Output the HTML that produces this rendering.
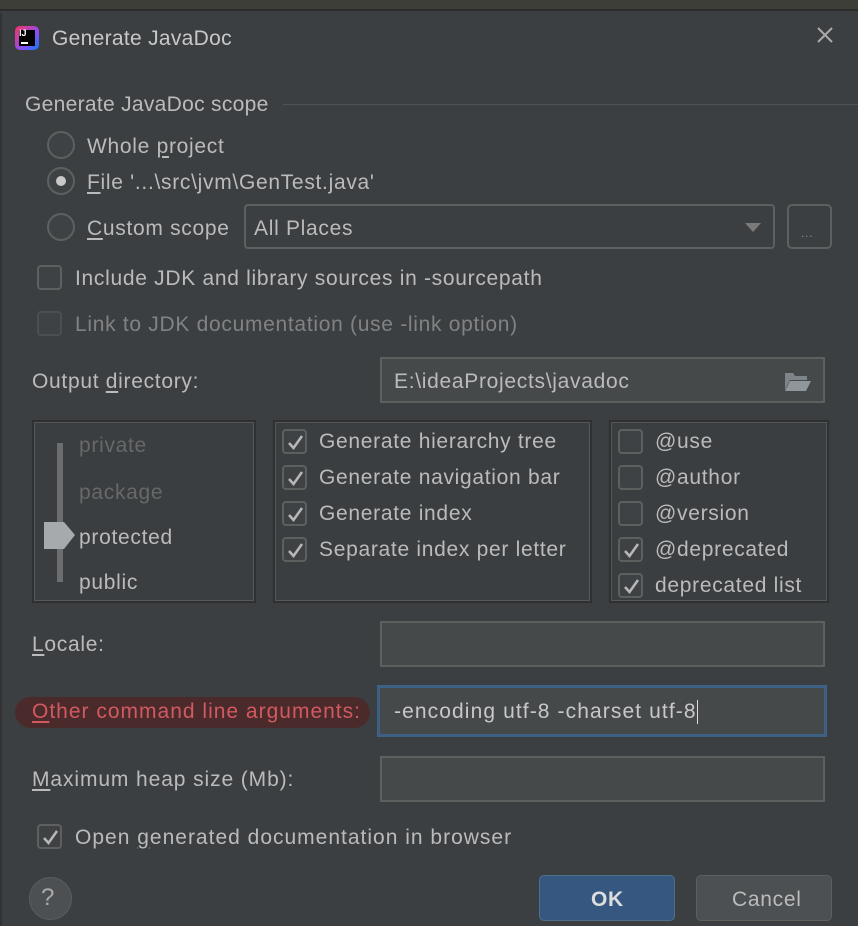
<!DOCTYPE html>
<html><head><meta charset="utf-8"><style>
*{box-sizing:border-box;margin:0;padding:0}
body{width:858px;height:926px;background:#3c3f41;position:relative;overflow:hidden;font-family:"Liberation Sans","Noto Sans CJK SC",sans-serif;font-size:21px;letter-spacing:0.7px;color:#bbbbbb}
.a{position:absolute;white-space:nowrap;line-height:24px}
.top{position:absolute;left:0;top:0;width:858px;height:11px;background:#3e3e39;border-bottom:2px solid #2b2b2b}
.radio{position:absolute;width:28px;height:28px;border-radius:50%;border:2px solid #5e6060;background:#3f4244}
.cb{position:absolute;width:25px;height:25px;border-radius:4px;border:2px solid #5e6060;background:#3f4244}
.cb.dis{border-color:#4c4f51}
.cb svg{position:absolute;left:2px;top:2px}
.field{position:absolute;background:#45494a;border:2px solid #5e6060}
.panel{position:absolute;border:2px solid #2e3032;box-shadow:inset 0 0 0 1px #555759;background:#3b3e40}
u{text-decoration:underline;text-underline-offset:3px}
</style></head><body>
<div class="top"></div>
<div style="position:absolute;left:0;top:13px;width:2px;height:913px;background:#333"></div>
<div style="position:absolute;left:15px;top:26px;width:24px;height:24px;border-radius:5px;background:linear-gradient(135deg,#fe315d,#8b4cf5 60%,#087cfa)"></div>
<div style="position:absolute;left:19px;top:30px;width:16px;height:16px;background:#000"></div>
<div class="a" style="left:19px;top:28px;font-size:9px;font-weight:bold;color:#fff;line-height:10px;letter-spacing:0">IJ</div>
<div style="position:absolute;left:21px;top:42px;width:7px;height:2px;background:#fff"></div>
<div class="a" style="left:52px;top:27px;font-size:21px;letter-spacing:0.3px;color:#c8c8c8">Generate JavaDoc</div>
<svg style="position:absolute;left:816px;top:26px" width="18" height="18"><path d="M2 2L16 16M16 2L2 16" stroke="#aaa" stroke-width="2"/></svg>

<div class="a" style="left:25px;top:93px;letter-spacing:0.3px">Generate JavaDoc scope</div>
<div style="position:absolute;left:283px;top:104px;width:575px;height:1px;background:#505355"></div>

<div class="radio" style="left:47px;top:131px"></div>
<div class="a" style="left:87px;top:135px">Whole <u>p</u>roject</div>
<div class="radio" style="left:47px;top:167px"></div>
<div style="position:absolute;left:56px;top:176px;width:10px;height:10px;border-radius:50%;background:#c8c8c8"></div>
<div class="a" style="left:87px;top:171px"><u>F</u>ile '...\src\jvm\GenTest.java'</div>
<div class="radio" style="left:47px;top:213px"></div>
<div class="a" style="left:87px;top:217px"><u>C</u>ustom scope</div>
<div style="position:absolute;left:244px;top:204px;width:531px;height:45px;border:2px solid #5e6060;border-radius:4px;background:#3c3f41"></div>
<div class="a" style="left:254px;top:217px">All Places</div>
<svg style="position:absolute;left:745px;top:223px" width="16" height="10"><path d="M0 0H16L8 9Z" fill="#7a7a7a"/></svg>
<div style="position:absolute;left:787px;top:204px;width:45px;height:45px;border:2px solid #5e6060;border-radius:5px"></div>
<div class="a" style="left:801px;top:221px;font-size:12px;color:#888">...</div>

<div class="cb" style="left:37px;top:265px"></div>
<div class="a" style="left:75px;top:267px">Include JDK and library sources in -sourcepath</div>
<div class="cb dis" style="left:37px;top:311px"></div>
<div class="a" style="left:75px;top:313px;color:#808284">Link to JDK documentation (use -link option)</div>

<div class="a" style="left:32px;top:370px">Output <u>d</u>irectory:</div>
<div class="field" style="left:380px;top:357px;width:445px;height:46px"></div>
<div class="a" style="left:394px;top:370px">E:\ideaProjects\javadoc</div>
<svg style="position:absolute;left:784px;top:370px" width="28" height="22"><path d="M1 3h8l2 3h12v4H6L1 20Z" fill="#7d858a"/><path d="M6 11h21l-5 10H1Z" fill="#8f979c"/></svg>

<div class="panel" style="left:32px;top:420px;width:224px;height:183px"></div>
<div style="position:absolute;left:57px;top:443px;width:6px;height:139px;background:#6b6d6f"></div>
<svg style="position:absolute;left:44px;top:522px" width="32" height="28"><path d="M0 0H20L31 13L20 27H0Z" fill="#a7aaad"/></svg>
<div class="a" style="left:79px;top:434px;color:#666869">private</div>
<div class="a" style="left:79px;top:481px;color:#666869">package</div>
<div class="a" style="left:79px;top:526px">protected</div>
<div class="a" style="left:79px;top:571px">public</div>

<div class="panel" style="left:273px;top:420px;width:319px;height:183px"></div>
<div class="panel" style="left:609px;top:420px;width:220px;height:183px"></div>

<div id="checks"></div>
<div class="cb" style="left:37px;top:824px"></div>

<div style="position:absolute;left:15px;top:697px;width:355px;height:31px;border-radius:16px;background:#4b2a2c"></div>
<div class="a" style="left:32px;top:700px;color:#d05a60;letter-spacing:1px"><u>O</u>ther command line arguments:</div>
<div class="field" style="left:377px;top:685px;width:450px;height:52px;border:3px solid #3d6185;background:#45494a"></div>
<div class="a" style="left:394px;top:700px;color:#c8c8c8;letter-spacing:1.1px">-encoding utf-8 -charset utf-8<span style="display:inline-block;width:1px;height:24px;background:#ddd;vertical-align:middle;margin-left:0"></span></div>

<div class="a" style="left:32px;top:633px"><u>L</u>ocale:</div>
<div class="field" style="left:380px;top:621px;width:445px;height:46px"></div>

<div class="a" style="left:32px;top:768px;letter-spacing:0.9px"><u>M</u>aximum heap size (Mb):</div>
<div class="field" style="left:380px;top:756px;width:445px;height:46px"></div>

<div class="a" style="left:75px;top:826px;letter-spacing:1px">Open <u>g</u>enerated documentation in browser</div>

<div style="position:absolute;left:29px;top:877px;width:43px;height:43px;border-radius:50%;background:#4d5052;border:1px solid #5a5d5f"></div>
<div class="a" style="left:41px;top:886px;font-size:24px;color:#aaa">?</div>
<div style="position:absolute;left:539px;top:875px;width:136px;height:46px;border-radius:5px;background:#365880;border:1px solid #4c708c"></div>
<div class="a" style="left:591px;top:888px;font-weight:bold;color:#ddd">OK</div>
<div style="position:absolute;left:696px;top:875px;width:136px;height:46px;border-radius:5px;background:#4c5052;border:1px solid #5e6060"></div>
<div class="a" style="left:732px;top:888px">Cancel</div>

<script>
var tick='<svg width="19" height="19"><path d="M3 10L7.5 15L16 3" fill="none" stroke="#b8b8b8" stroke-width="2.5"/></svg>';
var items=[[282,429,1,'Generate hierarchy tree'],[282,465,1,'Generate navigation bar'],[282,501,1,'Generate index'],[282,537,1,'Separate index per letter'],
[618,429,0,'@use'],[618,465,0,'@author'],[618,501,0,'@version'],[618,537,1,'@deprecated'],[618,573,1,'deprecated list']];
var h='';
items.forEach(function(i){h+='<div class="cb" style="left:'+i[0]+'px;top:'+i[1]+'px">'+(i[2]?tick:'')+'</div><div class="a" style="left:'+(i[0]+37)+'px;top:'+(i[1]+1)+'px">'+i[3]+'</div>';});
document.getElementById('checks').innerHTML=h;
var cbs=document.querySelectorAll('.cb');cbs[cbs.length-1].innerHTML=tick;
</script>
</body></html>
